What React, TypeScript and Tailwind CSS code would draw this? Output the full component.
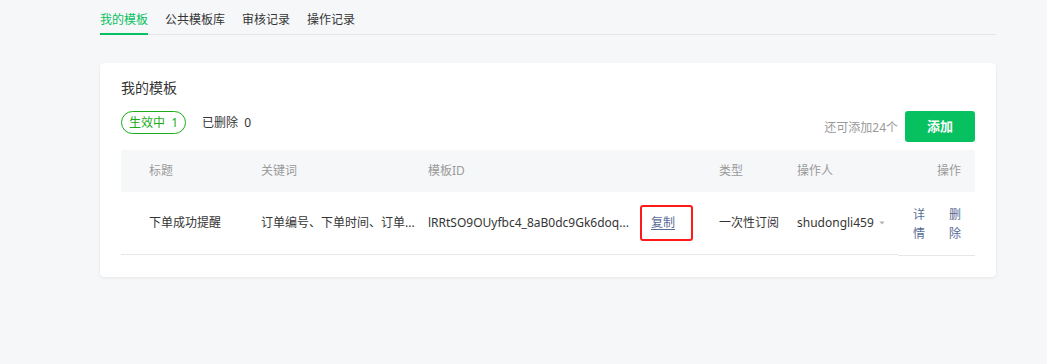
import React from "react";

const font = { fontFamily: '"Noto Sans", "Noto Sans CJK SC", sans-serif' };

export default function App() {
  const cols = "grid grid-cols-[112px_167px_291px_78px_129px_77px]";
  return (
    <div className="w-[1047px] h-[364px] bg-[#f6f7f9] text-[#353535] overflow-hidden" style={font}>
      <div className="ml-[100px] w-[896px]">
        <div className="flex gap-[17px] pt-[10px] border-b border-[#e5e6e8] text-[12px] leading-[20px]">
          <div className="pb-[3px] border-b-2 border-[#07c160] -mb-px text-[#07c160]">我的模板</div>
          <div className="pb-[3px] text-[#353535]">公共模板库</div>
          <div className="pb-[3px] text-[#353535]">审核记录</div>
          <div className="pb-[3px] text-[#353535]">操作记录</div>
        </div>

        <div className="mt-[28px] bg-white rounded-[4px] shadow-[0_1px_3px_rgba(0,0,0,0.08)] px-[21px] pt-[15px] pb-[21px]">
          <div className="text-[14px] leading-[20px] text-[#353535]">我的模板</div>
          <div className="mt-[13px] flex items-start justify-between">
            <div className="flex items-center text-[12px]">
              <div className="h-[23px] w-[65px] rounded-full border border-[#1aad19] text-[#1aad19] flex items-center justify-center leading-none">
                生效中&nbsp;&nbsp;1
              </div>
              <div className="ml-[16px] text-[#353535]">已删除&nbsp;&nbsp;0</div>
            </div>
            <div className="flex items-center">
              <span className="text-[12px] text-[#9a9a9a] mt-[2px]">还可添加24个</span>
              <button className="ml-[7px] w-[70px] h-[31px] rounded-[3px] bg-[#07c160] text-white text-[13px] font-bold">
                添加
              </button>
            </div>
          </div>

          <div className="mt-[8px] text-[12px]">
            <div className={`${cols} h-[42px] items-center bg-[#f6f7f9] text-[#9a9a9a]`}>
              <div className="pl-[28px]">标题</div>
              <div className="pl-[28px]">关键词</div>
              <div className="pl-[28px]">模板ID</div>
              <div className="pl-[28px]">类型</div>
              <div className="pl-[28px]">操作人</div>
              <div className="pr-[14px] text-right">操作</div>
            </div>
            <div className={`${cols} items-start`}>
              <div className="pl-[28px] h-[63px] flex items-center border-b border-[#e7e7e7] whitespace-nowrap">下单成功提醒</div>
              <div className="pl-[28px] h-[63px] flex items-center border-b border-[#e7e7e7] whitespace-nowrap">订单编号、下单时间、订单...</div>
              <div className="pl-[28px] h-[63px] flex items-center border-b border-[#e7e7e7] whitespace-nowrap">
                <span className="w-[207px] shrink-0 overflow-hidden">lRRtSO9OUyfbc4_8aB0dc9Gk6doq...</span>
                <span className="shrink-0 ml-[5px] h-[36px] pl-[9px] pr-[16px] border-2 border-[#ff1a1a] rounded-[3px] flex items-center text-[#576b95] underline underline-offset-2">
                  复制
                </span>
              </div>
              <div className="pl-[28px] h-[63px] flex items-center border-b border-[#e7e7e7] whitespace-nowrap">一次性订阅</div>
              <div className="pl-[28px] h-[63px] flex items-center border-b border-[#e7e7e7] whitespace-nowrap">
                <span>shudongli459</span>
                <svg className="ml-[5px]" width="6" height="4" viewBox="0 0 6 4">
                  <path d="M0.5 0.5 L5.5 0.5 L3 3.5 Z" fill="#b2b2b2" />
                </svg>
              </div>
              <div className="h-[64px] flex items-center justify-between pl-[15px] pr-[14px] border-b border-[#e7e7e7] text-[#576b95] leading-[19px]">
                <div className="flex flex-col"><span>详</span><span>情</span></div>
                <div className="flex flex-col"><span>删</span><span>除</span></div>
              </div>
            </div>
          </div>
        </div>
      </div>
    </div>
  );
}
